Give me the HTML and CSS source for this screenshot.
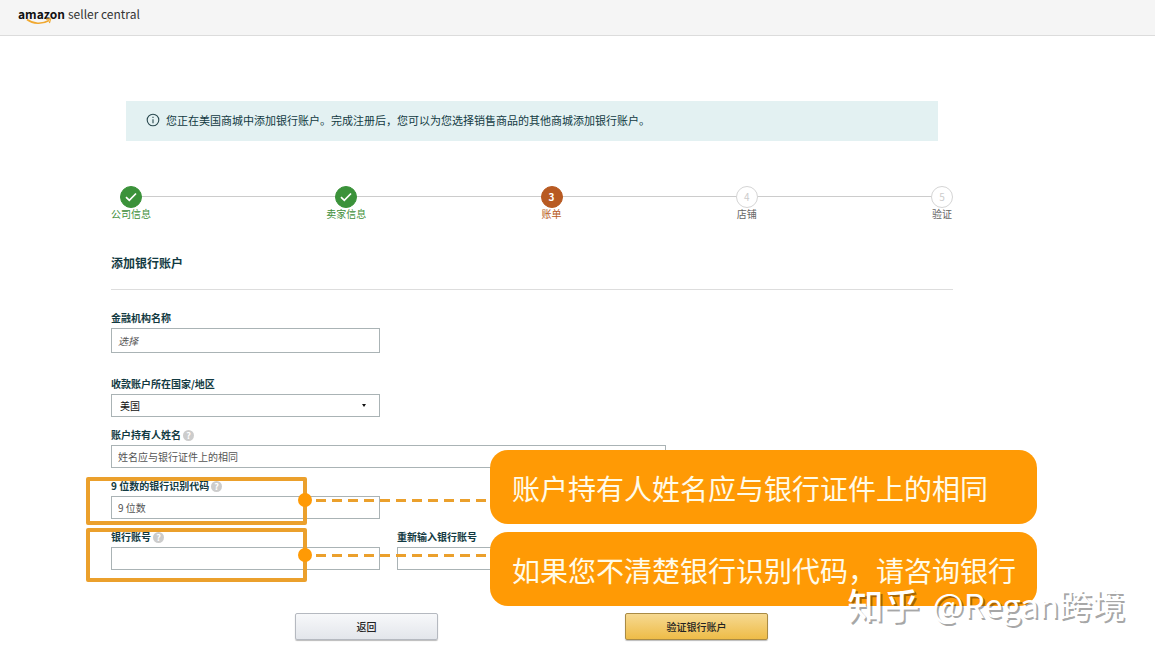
FILE: index.html
```
<!DOCTYPE html>
<html lang="zh-CN">
<head>
    <meta charset="UTF-8">
    <meta name="viewport" content="width=device-width, initial-scale=1.0">
    <title>Amazon Seller Central</title>
    <link rel="stylesheet" href="styles.css">
</head>
<body>

<header class="header">
    <div class="logo">
        <span class="logo-name">amazon</span>
        <span class="logo-product">seller central</span>
        <svg class="logo-smile" viewBox="0 0 26 7" aria-hidden="true">
            <path d="M1 1.5C7 6 16 6.5 23 2.5" fill="none" stroke="#f0a830" stroke-width="1.6"/>
            <path d="M20 1.2L24.6 1L23.4 5" fill="none" stroke="#f0a830" stroke-width="1.2"/>
        </svg>
    </div>
</header>

<main class="container">
    <div class="alert">
        <svg class="alert-icon" viewBox="0 0 14 14" aria-hidden="true">
            <circle cx="7" cy="7" r="5.8" fill="none" stroke="#2b4a50" stroke-width="1.1"/>
            <path d="M7 6.2V10.2M7 3.8V5" stroke="#2b4a50" stroke-width="1.1"/>
        </svg>
        <span>您正在美国商城中添加银行账户。完成注册后，您可以为您选择销售商品的其他商城添加银行账户。</span>
    </div>

    <!-- Registration steps -->
    <ol class="steps">
        <li class="step done">
            <span class="step-circle">
                <svg class="check" viewBox="0 0 12 10" aria-hidden="true"><path d="M1 5.2L4.3 8.3L11 1.5" fill="none" stroke="#fff" stroke-width="1.7"/></svg>
            </span>
            <span>公司信息</span>
        </li>
        <li class="step done">
            <span class="step-circle">
                <svg class="check" viewBox="0 0 12 10" aria-hidden="true"><path d="M1 5.2L4.3 8.3L11 1.5" fill="none" stroke="#fff" stroke-width="1.7"/></svg>
            </span>
            <span>卖家信息</span>
        </li>
        <li class="step current">
            <span class="step-circle">3</span>
            <span>账单</span>
        </li>
        <li class="step">
            <span class="step-circle">4</span>
            <span>店铺</span>
        </li>
        <li class="step">
            <span class="step-circle">5</span>
            <span>验证</span>
        </li>
    </ol>

    <h2>添加银行账户</h2>

    <form id="bankForm">
        <div class="field intro">
            <label for="bank_name">金融机构名称</label>
            <input type="text" id="bank_name" class="tall" placeholder="选择">
        </div>

        <div class="field">
            <label for="country">收款账户所在国家/地区</label>
            <div class="select">
                <select id="country">
                    <option>美国</option>
                </select>
            </div>
        </div>

        <div class="field wide">
            <div class="label-row">
                <label for="holder">账户持有人姓名</label>
                <span class="help">?</span>
            </div>
            <input type="text" id="holder" placeholder="姓名应与银行证件上的相同">
            <div class="callout">账户持有人姓名应与银行证件上的相同</div>
        </div>

        <div class="field">
            <div class="label-row">
                <label for="routing">9 位数的银行识别代码</label>
                <span class="help">?</span>
            </div>
            <input type="text" id="routing" placeholder="9 位数">
            <div class="highlight"></div>
        </div>

        <div class="field-row">
            <div class="field">
                <div class="label-row">
                    <label for="account">银行账号</label>
                    <span class="help">?</span>
                </div>
                <input type="text" id="account">
                <div class="highlight large"></div>
            </div>
            <div class="field">
                <label for="account_again">重新输入银行账号</label>
                <input type="text" id="account_again">
            </div>
            <div class="callout">如果您不清楚银行识别代码，请咨询银行</div>
        </div>

        <div class="buttons">
            <button type="button">返回</button>
            <button type="submit" class="primary">验证银行账户</button>
        </div>
    </form>
</main>

<div class="watermark"><span class="watermark-site">知乎</span><span>@Regan跨境</span></div>

</body>
</html>
```
FILE: styles.css
```
* {
    box-sizing: border-box;
}

body {
    position: relative;
    min-height: 100vh;
    margin: 0;
    font-family: "Noto Sans CJK SC", sans-serif;
    font-size: 10px;
    line-height: 14px;
    color: #123a42;
    background-color: white;
}

.header {
    height: 36px;
    padding: 5px 18px;
    background-color: #f5f5f5;
    border-bottom: 1px solid #dcdcdc;
}

.logo {
    position: relative;
    display: flex;
    gap: 3px;
    font-size: 12px;
    line-height: 18px;
    color: #333;
}

.logo-name {
    font-weight: bold;
    color: #111;
}

.logo-smile {
    position: absolute;
    left: 8px;
    top: 13px;
    width: 26px;
    height: 7px;
}

.container {
    margin: 65px 202px 0 111px;
}

.alert {
    display: flex;
    align-items: center;
    gap: 6px;
    min-height: 40px;
    margin: 0 15px;
    padding: 0 20px 2px;
    background-color: #e3f1f2;
    font-size: 11px;
}

.alert-icon {
    width: 14px;
    height: 14px;
}

.steps {
    position: relative;
    display: flex;
    justify-content: space-between;
    margin: 45px 1px 0 0;
    padding: 0;
    list-style: none;
}

.steps::before {
    content: "";
    position: absolute;
    left: 20px;
    right: 10px;
    top: 10px;
    height: 1px;
    background-color: #ccc;
}

.step {
    position: relative;
    display: flex;
    flex-direction: column;
    align-items: center;
    line-height: 12px;
    color: #666;
}

.step-circle {
    display: flex;
    align-items: center;
    justify-content: center;
    width: 22px;
    height: 22px;
    margin: 0 -1px;
    border: 1px solid #d5d5d5;
    border-radius: 50%;
    color: #ccc;
    background-color: white;
}

.check {
    width: 12px;
    height: 10px;
}

.done {
    color: #3f8f3a;
}

.done .step-circle {
    border-color: #3b923a;
    background-color: #3b923a;
}

.current {
    color: #b85a22;
}

.current .step-circle {
    border-color: #b85a22;
    background-color: #b85a22;
    color: white;
    font-weight: bold;
}

h2 {
    margin: 33px 0 21px;
    padding-bottom: 16px;
    border-bottom: 1px solid #ddd;
    font-size: 12px;
    font-weight: bold;
    line-height: 20px;
}

form {
    display: flex;
    flex-direction: column;
    gap: 11px;
}

.field {
    position: relative;
    display: flex;
    flex-direction: column;
    gap: 3px;
    width: 269px;
}

.field.wide {
    width: 555px;
}

.intro {
    margin-bottom: 13px;
}

.field-row {
    position: relative;
    display: flex;
    gap: 17px;
}

label {
    font-weight: bold;
}

.label-row {
    display: flex;
    align-items: center;
    gap: 2px;
}

.help {
    width: 11px;
    height: 11px;
    border-radius: 50%;
    background-color: #ccc;
    color: white;
    font-size: 9px;
    font-weight: bold;
    line-height: 11px;
    text-align: center;
}

input,
select {
    width: 100%;
    height: 23px;
    padding: 0 6px;
    border: 1px solid #aab3b5;
    border-radius: 0;
    background-color: white;
    color: #111;
    font-family: inherit;
    font-size: 10px;
}

input.tall {
    height: 25px;
}

input::placeholder {
    color: #555;
}

.tall::placeholder {
    font-style: italic;
}

select {
    appearance: none;
    padding: 0 8px;
}

.select {
    position: relative;
}

.select::after {
    content: "";
    position: absolute;
    right: 14px;
    top: 10px;
    border: 2px solid transparent;
    border-top: 3px solid #111;
}

/* Orange frame with a dot and a dashed line to the callout */
.highlight {
    position: absolute;
    left: -25px;
    top: -2px;
    width: 221px;
    height: 48px;
    border: 4px solid #eba02c;
    border-radius: 2px;
    z-index: 1;
}

.highlight.large {
    height: 54px;
}

.highlight::before {
    content: "";
    position: absolute;
    right: -9px;
    top: 12px;
    width: 14px;
    height: 14px;
    border-radius: 50%;
    background-color: #ff9a05;
}

.highlight::after {
    content: "";
    position: absolute;
    left: 226px;
    top: 18px;
    width: 176px;
    height: 3px;
    background: repeating-linear-gradient(to right, #eba02c 0, #eba02c 10px, transparent 10px, transparent 16px);
}

.highlight.large::before {
    top: 16px;
}

.highlight.large::after {
    top: 22px;
}

.callout {
    position: absolute;
    left: 379px;
    top: 22px;
    width: 547px;
    height: 74px;
    padding: 0 22px;
    border-radius: 18px;
    background-color: #ff9a05;
    color: #fffbe8;
    font-size: 28px;
    line-height: 76px;
    white-space: nowrap;
    z-index: 2;
}

.field-row .callout {
    top: 2px;
}

.buttons {
    display: flex;
    justify-content: space-between;
    margin: 32px 185px 0 184px;
}

button {
    width: 143px;
    height: 27px;
    padding: 0;
    border: 1px solid #b5b9c0;
    border-radius: 2px;
    background: linear-gradient(#f7f8fa, #e3e6eb);
    box-shadow: 0 1px 1px #bbb;
    color: #222;
    font-family: inherit;
    font-size: 10px;
    font-weight: 500;
}

.primary {
    border-color: #a98b45;
    background: linear-gradient(#f6d991, #eebc48);
}

.watermark {
    position: absolute;
    right: 30px;
    bottom: 29px;
    display: flex;
    align-items: center;
    gap: 13px;
    color: white;
    font-size: 33px;
    line-height: 48px;
    text-shadow: 2px 2px 0 rgba(0, 0, 0, 0.35);
    z-index: 3;
}

.watermark-site {
    font-size: 36px;
    font-weight: 500;
}
```
